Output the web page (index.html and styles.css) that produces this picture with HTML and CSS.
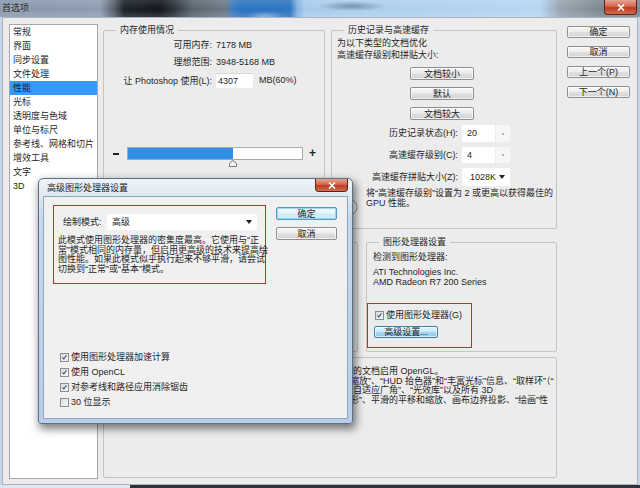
FILE: index.html
```html
<!DOCTYPE html>
<html lang="zh-CN">
<head>
<meta charset="utf-8">
<title>首选项</title>
<link rel="stylesheet" href="styles.css">
</head>
<body>
<div class="screen">
  <div class="titlebar">
    <span class="wintitle">首选项</span>
    <span class="closebtn big"><svg viewBox="0 0 8 7"><path d="M1 0.5 L7 6.5 M7 0.5 L1 6.5" stroke="#fff" stroke-width="1.6"/></svg></span>
  </div>
  <div class="client">
    <ul class="navlist">
      <li>常规</li>
      <li>界面</li>
      <li>同步设置</li>
      <li>文件处理</li>
      <li class="sel">性能</li>
      <li>光标</li>
      <li>透明度与色域</li>
      <li>单位与标尺</li>
      <li>参考线、网格和切片</li>
      <li>增效工具</li>
      <li>文字</li>
      <li>3D</li>
    </ul>
    <div class="panels">
      <div class="row row-top">
        <fieldset class="group mem">
          <legend>内存使用情况</legend>
          <div class="memgrid">
            <span class="lbl">可用内存:</span><span>7178 MB</span>
            <span class="lbl">理想范围:</span><span>3948-5168 MB</span>
            <span class="lbl">让 Photoshop 使用(L):</span>
            <span class="memuse"><span class="memfield">4307</span><span class="unit">MB(60%)</span></span>
          </div>
          <div class="slider">
            <span class="minus"></span>
            <div class="trackwrap">
              <div class="track"><div class="fill" style="width:105px"></div></div>
              <svg class="thumb" viewBox="0 0 8 7"><path d="M0.5 6.5 L0.5 3.5 L4 0.5 L7.5 3.5 L7.5 6.5 Z" fill="#f4f4f4" stroke="#777" stroke-width="1"/></svg>
            </div>
            <span class="plus">+</span>
          </div>
        </fieldset>
        <fieldset class="group hist">
          <legend>历史记录与高速缓存</legend>
          <p class="intro">为以下类型的文档优化<br>高速缓存级别和拼贴大小:</p>
          <div class="presets">
            <button class="btn preset">文档较小</button>
            <button class="btn preset">默认</button>
            <button class="btn preset">文档较大</button>
          </div>
          <div class="cachegrid">
            <span class="lbl">历史记录状态(H):</span>
            <span class="spin"><span class="val">20</span><span class="arrows"><i></i></span></span>
            <span class="lbl">高速缓存级别(C):</span>
            <span class="spin"><span class="val">4</span><span class="arrows"><i></i></span></span>
            <span class="lbl">高速缓存拼贴大小(Z):</span>
            <span class="combo tile"><span>1028K</span><span class="caret"></span></span>
          </div>
          <div class="note">
            <svg class="info" viewBox="0 0 18 18"><circle cx="9" cy="9" r="8" fill="#f3f3f3" stroke="#8a8a8a" stroke-width="1"/></svg>
            <p>将“高速缓存级别”设置为 2 或更高以获得最佳的<br>GPU 性能。</p>
          </div>
        </fieldset>
      </div>
      <div class="row row-mid">
        <div class="group scratch"></div>
        <fieldset class="group gpu">
          <legend>图形处理器设置</legend>
          <p class="detect">检测到图形处理器:</p>
          <p class="card">ATI Technologies Inc.<br>AMD Radeon R7 200 Series</p>
          <div class="redbox gpured">
            <div class="check"><span class="cb"><svg viewBox="0 0 9 9"><path d="M1.8 4.4 L3.6 6.4 L7 1.8" fill="none" stroke="#24468c" stroke-width="1.3"/></svg></span>使用图形处理器(G)</div>
            <button class="btn hot adv">高级设置...</button>
          </div>
        </fieldset>
      </div>
      <div class="desc">
        <div>的文档启用 OpenGL。</div>
        <div class="cut">缩放”、“HUD 拾色器”和“丰富光标”信息、“取样环”（“</div>
        <div>自适应广角”、“光效库”以及所有 3D</div>
        <div class="cut">形”、平滑的平移和缩放、画布边界投影、“绘画”性</div>
      </div>
    </div>
    <div class="actions">
      <button class="btn act">确定</button>
      <button class="btn act">取消</button>
      <button class="btn act">上一个(P)</button>
      <button class="btn act">下一个(N)</button>
    </div>
  </div>
  <div class="desk"></div>

  <div class="modal">
    <div class="mtitle">
      <span class="mtext">高级图形处理器设置</span>
      <span class="closebtn small"><svg viewBox="0 0 8 7"><path d="M1 0.5 L7 6.5 M7 0.5 L1 6.5" stroke="#fff" stroke-width="1.6"/></svg></span>
    </div>
    <div class="mclient">
      <div class="mtop">
        <div class="redbox moderbox">
          <div class="moderow">
            <span class="mlabel">绘制模式:</span>
            <span class="combo modecombo"><span>高级</span><span class="caret"></span></span>
          </div>
          <p class="modedesc">此模式使用图形处理器的密集度最高。它使用与“正<br>常”模式相同的内存量，但启用更高级的技术来提高绘<br>图性能。如果此模式似乎执行起来不够平滑，请尝试<br>切换到“正常”或“基本”模式。</p>
        </div>
        <div class="mbtns">
          <button class="btn focus mbtn">确定</button>
          <button class="btn mbtn">取消</button>
        </div>
      </div>
      <div class="mchecks">
        <div class="check"><span class="cb"><svg viewBox="0 0 9 9"><path d="M1.8 4.4 L3.6 6.4 L7 1.8" fill="none" stroke="#24468c" stroke-width="1.3"/></svg></span>使用图形处理器加速计算</div>
        <div class="check"><span class="cb"><svg viewBox="0 0 9 9"><path d="M1.8 4.4 L3.6 6.4 L7 1.8" fill="none" stroke="#24468c" stroke-width="1.3"/></svg></span>使用 OpenCL</div>
        <div class="check"><span class="cb"><svg viewBox="0 0 9 9"><path d="M1.8 4.4 L3.6 6.4 L7 1.8" fill="none" stroke="#24468c" stroke-width="1.3"/></svg></span>对参考线和路径应用消除锯齿</div>
        <div class="check"><span class="cb"></span>30 位显示</div>
      </div>
    </div>
  </div>
</div>
</body>
</html>
```

FILE: styles.css
```css
* { box-sizing: border-box; margin: 0; padding: 0; }
html, body { width: 640px; height: 488px; overflow: hidden; }
body {
  font-family: "Liberation Sans", "Noto Sans CJK SC", sans-serif;
  font-size: 9px;
  line-height: 11px;
  color: #1f1f1f;
  background: #c8d7e7;
}
.screen { position: relative; width: 640px; height: 488px; display: flex; flex-direction: column; }

.titlebar {
  flex: none;
  height: 17px;
  display: flex;
  justify-content: space-between;
  align-items: flex-start;
  padding: 0 3px 0 2px;
  background:
    linear-gradient(rgba(255,255,255,.12), rgba(255,255,255,0) 55%, rgba(255,255,255,.14)),
    radial-gradient(36px 5px at 352px 6px, rgba(75,90,110,.55), rgba(75,90,110,0)),
    radial-gradient(20px 6px at 265px 17px, rgba(190,215,240,.55), rgba(190,215,240,0)),
    linear-gradient(90deg, #8797ab 0px, #8d9db1 100px, #56606d 114px, #1c222a 124px, #12161c 160px, #2e353e 175px, #59646f 192px, #6d7a86 226px, #3f7cbf 232px, #2b73c1 240px, #2c74c0 290px, #7fb0df 297px, #a9ccec 305px, #b6d6f2 540px, #98a4b0 560px, #7e8891 600px, #7e8891 640px);
}
.wintitle { line-height: 16px; color: #161616; text-shadow: 0 0 3px rgba(255,255,255,.55); }
.closebtn {
  display: flex; align-items: center; justify-content: center;
  border: 1px solid #5e2218; border-top: none;
  border-radius: 0 0 4px 4px;
  background: linear-gradient(#e6a491 0%, #d2694f 45%, #bb3a22 55%, #d0704f 100%);
}
.closebtn.big { width: 33px; height: 15px; }
.closebtn.small { width: 33px; height: 13px; }
.closebtn svg { width: 8px; height: 7px; }

.client {
  flex: none;
  height: 468px;
  margin: 0 2px;
  border: 1px solid #a9b4c0;
  background: #ececec;
  display: flex;
  padding: 6px 6px 5px 6px;
}
.navlist {
  list-style: none;
  width: 89px;
  flex: none;
  border: 1px solid #a7a7a7;
  background: #fff;
  margin-right: 5px;
}
.navlist li { height: 14px; line-height: 14px; padding-left: 3px; white-space: nowrap; }
.navlist li.sel { background: #3399ff; }

.panels { width: 454px; flex: none; display: flex; flex-direction: column; margin-right: 10px; }
.row { display: flex; flex: none; }
.row-top { height: 205px; gap: 6px; }
.row-mid { height: 116px; gap: 8px; margin-top: 7px; }

.group { border: 1px solid #c4c4c4; border-radius: 2px; min-width: 0; padding: 0; }
.group legend { margin-left: 12px; padding: 0 4px; line-height: 12px; }
.mem { width: 222px; }
.hist { width: 226px; }
.scratch { width: 255px; margin-top: 6px; }
.gpu { width: 191px; }

.memgrid {
  margin-top: 3px;
  display: grid;
  grid-template-columns: 108px auto;
  grid-template-rows: 12px 12px 15px;
  column-gap: 4px;
  row-gap: 5px;
  align-items: center;
  white-space: nowrap;
}
.lbl { text-align: right; white-space: nowrap; }
.memgrid .lbl { line-height: 12px; }
.memuse { display: flex; align-items: center; }
.memfield { width: 37px; height: 15px; line-height: 15px; padding-left: 2px; background: #fff; border-top: 1px solid #d6d6d6; }
.unit { margin-left: 6px; }
.slider { margin-top: 59px; padding-left: 9px; display: flex; align-items: flex-start; }
.minus { width: 6px; height: 2px; background: #222; margin-top: 6px; margin-right: 8px; }
.trackwrap { display: flex; flex-direction: column; width: 176px; }
.track { height: 13px; border: 1px solid #a9a9a9; background: #fff; }
.fill { height: 100%; background: #2f8fe9; }
.thumb { width: 8px; height: 7px; margin-left: 102px; }
.plus { margin-left: 6px; font-size: 12px; line-height: 13px; font-weight: bold; color: #222; }

.intro { margin-top: 2px; padding-left: 5px; line-height: 11.5px; white-space: nowrap; }
.presets { margin-top: 6px; padding-left: 78px; display: flex; flex-direction: column; gap: 7px; align-items: flex-start; }
.btn {
  font: inherit;
  font-size: 9px;
  color: #1f1f1f;
  padding: 0;
  border: 1px solid #8f8f8f;
  border-radius: 2px;
  background: linear-gradient(#f7f7f7 0%, #ededed 45%, #dedede 55%, #d4d4d4 100%);
  box-shadow: inset 0 0 0 1px rgba(255,255,255,.65);
  line-height: 10px;
  white-space: nowrap;
}
.preset { width: 64px; height: 13px; }
.cachegrid {
  margin-top: 5px;
  display: grid;
  grid-template-columns: 126px 48px;
  grid-template-rows: 17px 16px 18px;
  column-gap: 4px;
  row-gap: 5px;
  align-items: center;
}
.spin { height: 100%; display: flex; background: #fff; }
.spin .val { flex: 1; padding-left: 5px; line-height: 16px; }
.arrows { width: 15px; background: #f6f6f6; border-left: 1px solid #ececec; display: flex; align-items: center; justify-content: center; }
.arrows i { display: block; width: 2px; height: 2px; background: #b5b5b5; }
.combo { display: flex; align-items: center; justify-content: space-between; background: #fff; }
.tile { height: 100%; padding: 0 5px 0 8px; }
.caret { width: 0; height: 0; border-left: 3px solid transparent; border-right: 3px solid transparent; border-top: 4px solid #222; }
.note { margin-top: 3px; padding-left: 8px; display: flex; align-items: flex-start; }
.info { width: 18px; height: 18px; flex: none; margin-top: 9px; margin-right: 8px; }
.note p { line-height: 9.5px; white-space: nowrap; }

.detect { margin-top: 4px; padding-left: 6px; line-height: 11px; }
.card { margin-top: 5px; padding-left: 6px; line-height: 9.5px; white-space: nowrap; }
.redbox { border: 1px solid #d2262c; }
.gpured { margin-top: 16px; width: 105px; height: 45px; padding: 7px 0 0 7px; display: flex; flex-direction: column; align-items: flex-start; }
.check { display: flex; align-items: center; height: 9px; white-space: nowrap; }
.cb {
  width: 9px; height: 9px; flex: none;
  border: 1px solid #8c8d8e;
  background: linear-gradient(135deg, #d9d9d9, #fbfbfb);
  margin-right: 2px;
  display: flex;
}
.cb svg { width: 7px; height: 7px; }
.hot {
  border-color: #3c7fb1;
  background: linear-gradient(#e8f5fc 0%, #c9e7f7 45%, #a6d7f1 55%, #8fcbec 100%);
}
.adv { width: 64px; height: 12px; margin-top: 6px; margin-left: -1px; }

.desc {
  flex: none;
  margin-top: 5px;
  height: 121px;
  border: 1px solid #c4c4c4;
  border-radius: 2px;
  padding: 9px 0 0 249px;
  line-height: 9.5px;
  white-space: nowrap;
}
.desc .cut { margin-left: -3px; }

.actions { width: 63px; flex: none; display: flex; flex-direction: column; gap: 8px; margin-top: 2px; }
.act { width: 63px; height: 12px; }

.desk { flex: none; height: 3px; background: linear-gradient(90deg, #dde8f3 0, #dde8f3 130px, #2f3338 130px); }

.modal {
  position: absolute;
  left: 38px;
  top: 178px;
  width: 315px;
  height: 246px;
  border: 1px solid #5b6f87;
  border-radius: 5px 5px 3px 3px;
  background: linear-gradient(#eef3f8 0px, #dfe8f2 17px, #c6d8eb 40px, #b9cfe7 100%);
  box-shadow: 2px 4px 9px 1px rgba(0,0,0,.5);
  display: flex;
  flex-direction: column;
}
.mtitle { height: 17px; flex: none; display: flex; justify-content: space-between; align-items: flex-start; padding: 0 4px 0 8px; }
.mtext { line-height: 18px; color: #1e1e1e; }
.mclient {
  flex: none;
  height: 223px;
  margin: 0 4px;
  border: 1px solid #90a6bf;
  background: #f0f0f0;
  display: flex;
  flex-direction: column;
}
.mtop { display: flex; align-items: flex-start; margin-top: 8px; margin-left: 9px; }
.moderbox { width: 213px; height: 79px; padding: 8px 0 0 9px; }
.moderow { display: flex; align-items: center; }
.mlabel { width: 44px; }
.modecombo { width: 150px; height: 16px; padding: 0 5px 0 5px; }
.modedesc { margin-top: 6px; margin-left: -5px; line-height: 9.5px; white-space: nowrap; }
.mbtns { margin-left: 10px; margin-top: 2px; display: flex; flex-direction: column; gap: 7px; }
.mbtn { width: 61px; height: 13px; }
.focus {
  border-color: #4a9bd3;
  background: linear-gradient(#f2f9fd 0%, #e6f3fb 45%, #d6edf9 55%, #cbe7f7 100%);
  box-shadow: inset 0 0 0 1px #9fd5f3;
}
.mchecks { margin-top: 66px; padding-left: 16px; display: flex; flex-direction: column; }
.mchecks .check { height: 15px; }
```
